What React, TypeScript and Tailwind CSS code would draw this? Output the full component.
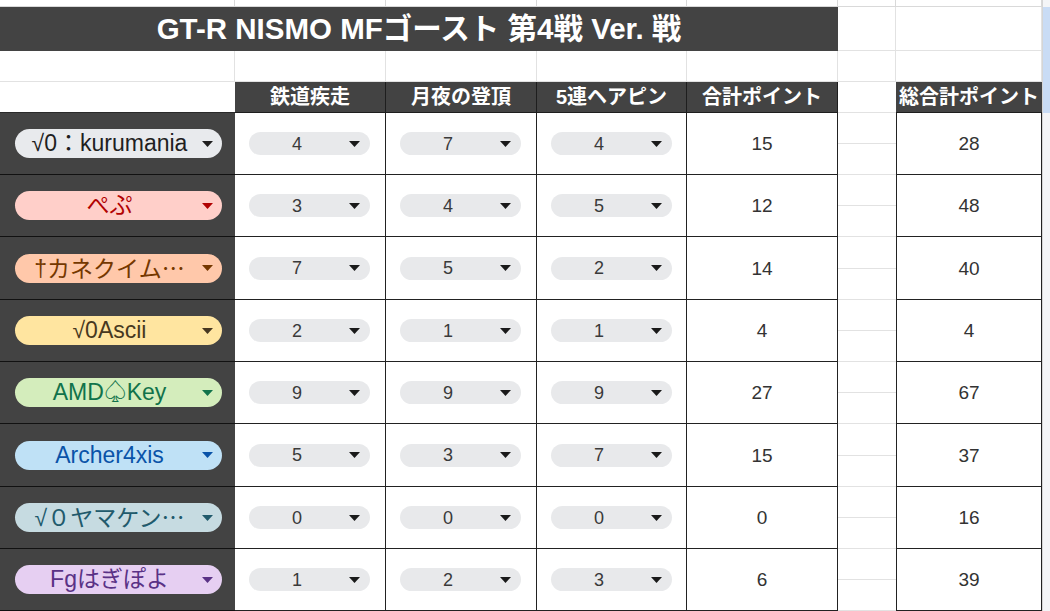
import React from "react";

const FONT = "font-['Liberation_Sans','Noto_Sans_CJK_JP',sans-serif]";

type P = {
  name: React.ReactNode;
  bg: string;
  fg: string;
  scores: number[];
  total: number;
  grand: number;
};

const Ell = () => <span className="font-['Noto_Sans_CJK_JP',sans-serif]">…</span>;

const players: P[] = [
  { name: "√0：kurumania", bg: "bg-[#e8eaed]", fg: "text-[#1f1f1f]", scores: [4, 7, 4], total: 15, grand: 28 },
  { name: "ぺぷ", bg: "bg-[#ffcfc9]", fg: "text-[#b10202]", scores: [3, 4, 5], total: 12, grand: 48 },
  { name: <>†カネクイム<Ell /></>, bg: "bg-[#ffc8aa]", fg: "text-[#753800]", scores: [7, 5, 2], total: 14, grand: 40 },
  { name: "√0Ascii", bg: "bg-[#ffe5a0]", fg: "text-[#473821]", scores: [2, 1, 1], total: 4, grand: 4 },
  { name: "AMD♤Key", bg: "bg-[#d4edbc]", fg: "text-[#11734b]", scores: [9, 9, 9], total: 27, grand: 67 },
  { name: "Archer4xis", bg: "bg-[#bfe1f6]", fg: "text-[#0a53a8]", scores: [5, 3, 7], total: 15, grand: 37 },
  { name: <>√０ヤマケン<Ell /></>, bg: "bg-[#c6dbe1]", fg: "text-[#215a6c]", scores: [0, 0, 0], total: 0, grand: 16 },
  { name: "Fgはぎぽよ", bg: "bg-[#e6cff2]", fg: "text-[#5a3286]", scores: [1, 2, 3], total: 6, grand: 39 },
];

const heights = ["h-[62px]", "h-[62px]", "h-[63px]", "h-[62px]", "h-[62px]", "h-[63px]", "h-[62px]", "h-[62px]"];
const scoreWidths = ["w-[151px]", "w-[151px]", "w-[150px]"];
const colWidths = ["w-[235px]", "w-[151px]", "w-[151px]", "w-[150px]", "w-[151px]", "w-[58px]", "w-[146px]"];

function Arrow({ className }: { className: string }) {
  return (
    <svg width="11" height="6" viewBox="0 0 11 6" className={className}>
      <path d="M0 0H11L5.5 6Z" fill="currentColor" />
    </svg>
  );
}

function ScrollCol({ thumb }: { thumb?: boolean }) {
  return <div className={`w-[8px] h-full border-l border-[#d5d5d5] ${thumb ? "bg-[#c9dcf5]" : "bg-[#f4f5f7]"}`} />;
}

export default function App() {
  return (
    <div className={`w-[1050px] h-[611px] overflow-hidden bg-white ${FONT}`}>
      {/* top sliver */}
      <div className="flex h-[7px]">
        {colWidths.map((w, i) => (
          <div key={i} className={`${w} h-full border-r border-b border-[#d9d9d9]`} />
        ))}
        <ScrollCol />
      </div>
      {/* title row */}
      <div className="flex h-[44px]">
        <div className="w-[838px] h-full bg-[#434343] flex items-center justify-center text-white font-bold text-[29.5px] leading-none">
          GT-R NISMO MFゴースト 第4戦 Ver. 戦
        </div>
        <div className="w-[58px] h-full border-r border-b border-[#e2e2e2]" />
        <div className="w-[146px] h-full border-r border-b border-[#e2e2e2]" />
        <ScrollCol thumb />
      </div>
      {/* empty row */}
      <div className="flex h-[31px]">
        {colWidths.map((w, i) => (
          <div key={i} className={`${w} h-full border-r border-b border-[#e2e2e2]`} />
        ))}
        <ScrollCol thumb />
      </div>
      {/* header row */}
      <div className="flex h-[31px]">
        <div className="w-[235px] h-full border-b border-[#2a2a2a]" />
        {[
          ["w-[151px]", "鉄道疾走"],
          ["w-[151px]", "月夜の登頂"],
          ["w-[150px]", "5連ヘアピン"],
          ["w-[151px]", "合計ポイント"],
        ].map(([w, t], i) => (
          <div
            key={i}
            className={`${w} h-full bg-[#434343] border-r border-b border-[#1e1e1e] flex items-center justify-center text-white font-bold text-[20px] leading-none`}
          >
            {t}
          </div>
        ))}
        <div className="w-[58px] h-full border-b border-[#e2e2e2]" />
        <div className="w-[146px] h-full bg-[#434343] border-b border-[#1e1e1e] flex items-center justify-center text-white font-bold text-[20px] leading-none whitespace-nowrap">
          総合計ポイント
        </div>
        <ScrollCol thumb />
      </div>
      {/* data rows */}
      {players.map((p, r) => (
        <div key={r} className={`flex ${heights[r]}`}>
          <div className="w-[235px] h-full bg-[#434343] border-b border-[#111] flex items-center pl-[15px]">
            <div className={`w-[207px] h-[29px] rounded-full ${p.bg} flex items-center`}>
              <span className={`flex-1 pl-[8px] text-center text-[23px] leading-none whitespace-nowrap ${p.fg}`}>
                {p.name}
              </span>
              <span className="w-[26px] flex justify-center pr-[4px]">
                <Arrow className={p.fg} />
              </span>
            </div>
          </div>
          {p.scores.map((s, i) => (
            <div key={i} className={`${scoreWidths[i]} h-full border-r border-b border-[#222] flex items-center pl-[14px]`}>
              <div className="w-[121px] h-[23px] rounded-full bg-[#e8e9eb] flex items-center">
                <span className="w-[96px] text-center text-[18px] leading-none text-[#3a3a3a]">{s}</span>
                <span className="w-[18px] flex justify-center">
                  <Arrow className="text-[#1a1a1a]" />
                </span>
              </div>
            </div>
          ))}
          <div className="w-[151px] h-full border-r border-b border-[#222] flex items-center justify-center text-[19px] leading-none text-[#333]">
            {p.total}
          </div>
          <div className="w-[58px] h-full flex flex-col">
            <div className="flex-1 border-b border-[#e2e2e2]" />
            <div className="flex-1 border-b border-[#e2e2e2]" />
          </div>
          <div className="w-[146px] h-full border-l border-r border-b border-[#222] flex items-center justify-center text-[19px] leading-none text-[#333]">
            {p.grand}
          </div>
          <ScrollCol />
        </div>
      ))}
    </div>
  );
}
